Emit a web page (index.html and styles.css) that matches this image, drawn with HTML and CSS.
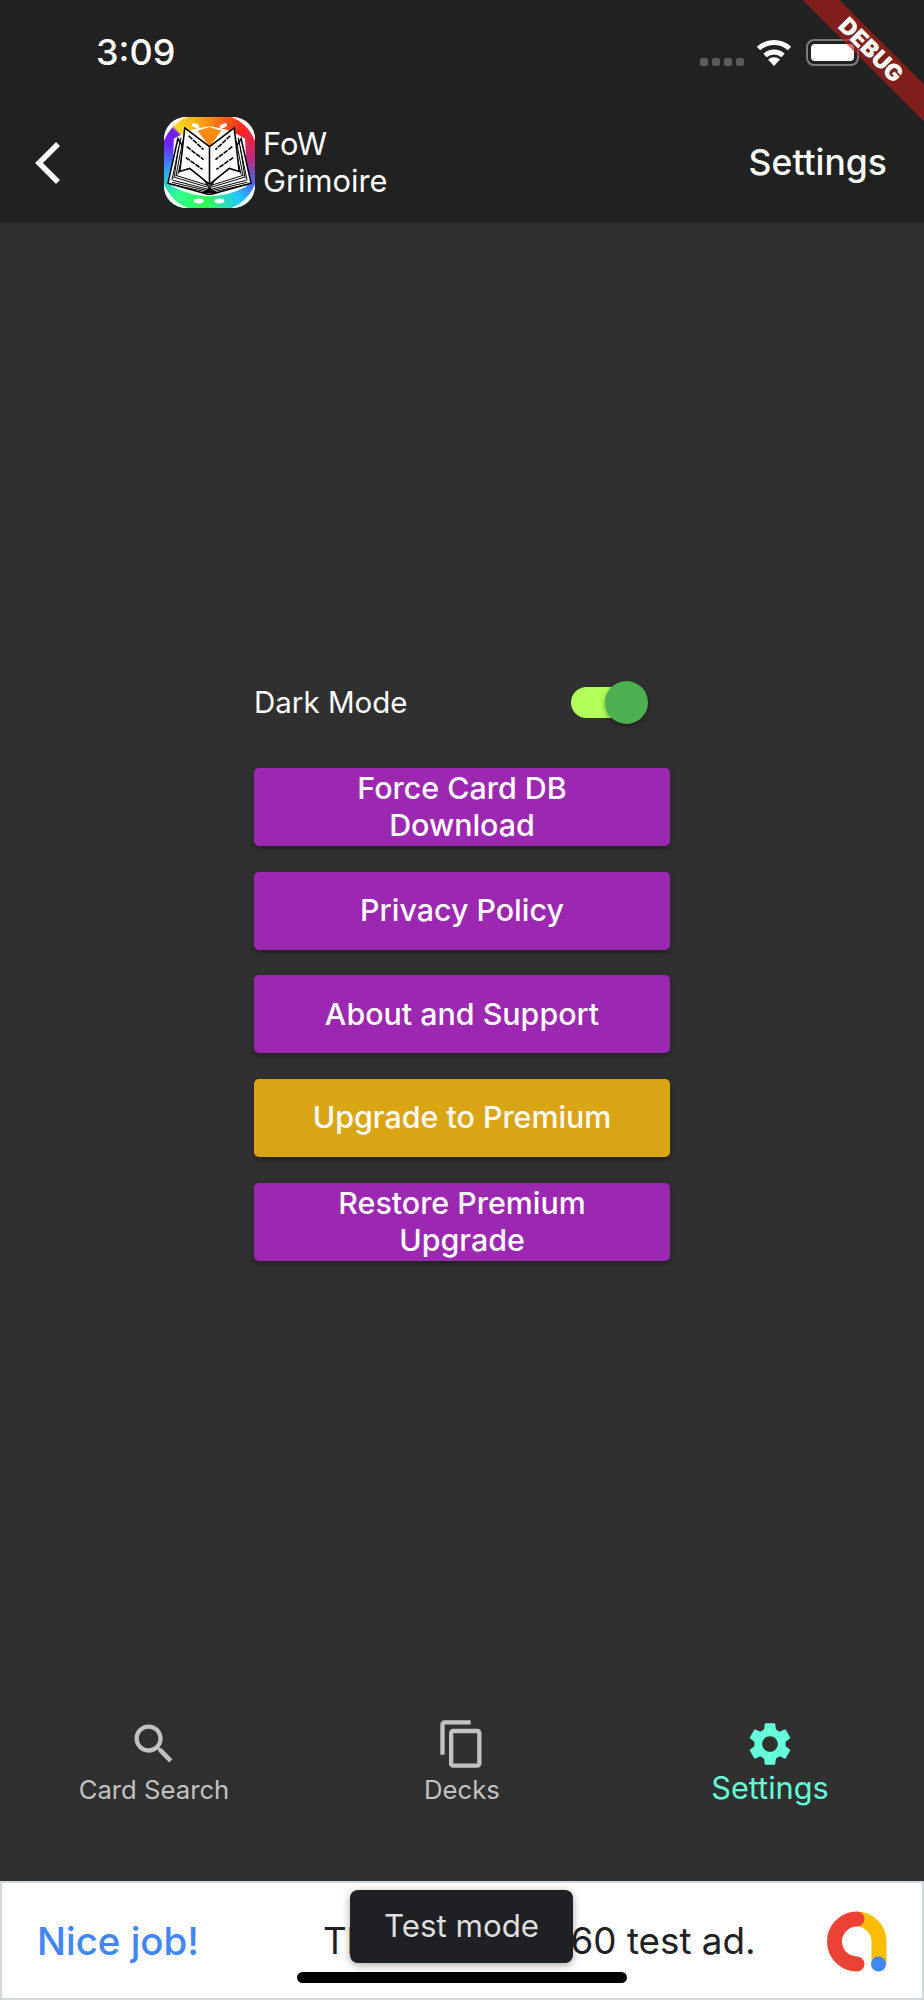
FILE: index.html
```html
<!DOCTYPE html>
<html lang="en">

<head>
    <meta charset="UTF-8">
    <meta name="viewport" content="width=device-width, initial-scale=1.0">
    <title>FoW Grimoire Settings</title>
    <link rel="stylesheet" href="styles.css">
</head>

<body>
    <div class="screen">
        <!-- App bar with status bar -->
        <header class="appbar">
            <div class="statusbar">
                <span class="clock">3:09</span>
                <div class="status-icons">
                    <div class="signal"><i></i><i></i><i></i><i></i></div>
                    <svg class="wifi" width="36" height="28" viewBox="0 0 36 28">
                        <path d="M2.5 10.5A23 23 0 0 1 33.5 10.5" fill="none" stroke="#fff" stroke-width="5" />
                        <path d="M9 17.5A13.5 13.5 0 0 1 27 17.5" fill="none" stroke="#fff" stroke-width="5" />
                        <path d="M18 28L12 21.5A9 9 0 0 1 24 21.5Z" fill="#fff" />
                    </svg>
                    <div class="battery"><div class="battery-level"></div></div>
                </div>
            </div>
            <div class="toolbar">
                <svg class="back" width="26" height="44" viewBox="0 0 26 44">
                    <path d="M23 3L4 22L23 41" fill="none" stroke="#fff" stroke-width="5.5" />
                </svg>
                <div class="logo">
                    <svg width="91" height="91" viewBox="0 0 92 92">
                        <!-- white corners and petals -->
                        <path d="M0 24V0H24Q8 6 0 24ZM68 0H92V24Q84 6 68 0ZM0 68V92H24Q8 86 0 68ZM92 68V92H68Q84 86 92 68Z" fill="#fff" />
                        <g fill="#fff">
                            <ellipse cx="46" cy="11" rx="6" ry="1.5" />
                            <ellipse cx="32" cy="9" rx="4" ry="2" transform="rotate(25 32 9)" />
                            <ellipse cx="60" cy="9" rx="4" ry="2" transform="rotate(-25 60 9)" />
                            <ellipse cx="35" cy="85" rx="5" ry="2.5" />
                            <ellipse cx="56" cy="85" rx="5" ry="2.5" />
                            <path d="M10 22Q46 -2 82 22L84 70Q46 90 8 70Z" opacity="0.95" />
                        </g>
                        <path d="M34 14L46 30L58 14L46 10Z" fill="#ff8a10" />
                        <!-- left and right page stacks -->
                        <path d="M14 22L4 67L44 78H48L88 67L78 22L46 72Z" fill="#fff" stroke="#000" stroke-width="1.5" />
                        <g stroke="#000" stroke-width="1" fill="none">
                            <path d="M17 21L8 64M15 30L10 62M19 24L12 60M21 30L14 58M75 21L84 64M77 30L82 62M73 24L80 60M71 30L78 58" />
                            <path d="M7 68L44 76M8 66L44 74.5M9 64L44 73M11 61L44 71M12 59L44 69M85 68L48 76M84 66L48 74.5M83 64L48 73M81 61L48 71M80 59L48 69" />
                        </g>
                        <path d="M21 11L46 30V68L26 52L16 55ZM71 11L46 30V68L66 52L76 55Z" fill="#fff" stroke="#000" stroke-width="1.6" />
                        <path d="M25 19L40 33M23 30L40 43M22 41L39 53M67 19L52 33M69 30L52 43M70 41L53 53" fill="none" stroke="#000" stroke-width="1.6" stroke-dasharray="5 1" />
                        <path d="M38 77H54L46 71Z" fill="#000" />
                    </svg>
                </div>
                <div class="app-name">FoW<br>Grimoire</div>
                <div class="page-title">Settings</div>
            </div>
        </header>

        <!-- Settings list -->
        <main class="content">
            <div class="settings">
                <div class="toggle-row">
                    <span class="toggle-label">Dark Mode</span>
                    <div class="switch"><div class="switch-thumb"></div></div>
                </div>
                <button class="btn">Force Card DB<br>Download</button>
                <button class="btn">Privacy Policy</button>
                <button class="btn">About and Support</button>
                <button class="btn btn-gold">Upgrade to Premium</button>
                <button class="btn">Restore Premium<br>Upgrade</button>
            </div>
        </main>

        <!-- Bottom navigation -->
        <nav class="bottom-nav">
            <div class="nav-item">
                <svg width="52" height="52" viewBox="0 0 24 24" fill="#c2c2c2">
                    <path d="M15.5 14h-.79l-.28-.27C15.41 12.59 16 11.11 16 9.5 16 5.91 13.09 3 9.5 3S3 5.91 3 9.5 5.91 16 9.5 16c1.61 0 3.09-.59 4.23-1.57l.27.28v.79l5 4.99L20.49 19l-4.99-5zm-6 0C7.01 14 5 11.99 5 9.5S7.01 5 9.5 5 14 7.01 14 9.5 11.99 14 9.5 14z" />
                </svg>
                <span>Card Search</span>
            </div>
            <div class="nav-item">
                <svg width="52" height="52" viewBox="0 0 24 24" fill="#c2c2c2">
                    <path d="M16 1H4c-1.1 0-2 .9-2 2v14h2V3h12V1zm3 4H8c-1.1 0-2 .9-2 2v14c0 1.1.9 2 2 2h11c1.1 0 2-.9 2-2V7c0-1.1-.9-2-2-2zm0 16H8V7h11v14z" />
                </svg>
                <span>Decks</span>
            </div>
            <div class="nav-item active">
                <svg width="52" height="52" viewBox="0 0 24 24" fill="#64ffda">
                    <path d="M19.14 12.94c.04-.3.06-.61.06-.94 0-.32-.02-.64-.07-.94l2.03-1.58c.18-.14.23-.41.12-.61l-1.92-3.32c-.12-.22-.37-.29-.59-.22l-2.39.96c-.5-.38-1.03-.7-1.62-.94l-.36-2.54c-.04-.24-.24-.41-.48-.41h-3.84c-.24 0-.43.17-.47.41l-.36 2.54c-.59.24-1.13.57-1.62.94l-2.39-.96c-.22-.08-.47 0-.59.22L2.74 8.87c-.12.21-.08.47.12.61l2.03 1.58c-.05.3-.09.63-.09.94s.02.64.07.94l-2.03 1.58c-.18.14-.23.41-.12.61l1.92 3.32c.12.22.37.29.59.22l2.39-.96c.5.38 1.03.7 1.62.94l.36 2.54c.05.24.24.41.48.41h3.84c.24 0 .44-.17.47-.41l.36-2.54c.59-.24 1.13-.56 1.62-.94l2.39.96c.22.08.47 0 .59-.22l1.92-3.32c.12-.22.07-.47-.12-.61l-2.01-1.58zM12 15.6c-1.98 0-3.6-1.62-3.6-3.6s1.62-3.6 3.6-3.6 3.6 1.62 3.6 3.6-1.62 3.6-3.6 3.6z" />
                </svg>
                <span>Settings</span>
            </div>
        </nav>

        <!-- Test ad banner -->
        <div class="ad">
            <span class="ad-cta">Nice job!</span>
            <span class="ad-text">This is a 468x60 test ad.</span>
            <svg class="ad-logo" width="62" height="62" viewBox="0 0 62 62">
                <path d="M31 9A22.5 22.5 0 0 1 53 31V54" fill="none" stroke="#fbbc04" stroke-width="15" />
                <path d="M31 9A22.5 22.5 0 1 0 31 54" fill="none" stroke="#ea4335" stroke-width="15" stroke-linecap="round" />
                <circle cx="52.5" cy="54" r="7.5" fill="#4285f4" />
            </svg>
        </div>

        <!-- Overlays -->
        <div class="toast">Test mode</div>
        <div class="home-bar"></div>
        <div class="debug-banner">DEBUG</div>
    </div>
</body>

</html>
```

FILE: styles.css
```css
* {
    box-sizing: border-box;
}

body {
    margin: 0;
    font-family: "Inter", "Roboto", sans-serif;
    background-color: #303030;
    color: #fff;
}

.screen {
    position: relative;
    display: flex;
    flex-direction: column;
    width: 924px;
    height: 2000px;
    overflow: hidden;
}

.appbar {
    height: 222px;
    flex-shrink: 0;
    background-color: #212121;
    box-shadow: 0 2px 5px rgba(0, 0, 0, 0.15);
}

.statusbar {
    display: flex;
    align-items: center;
    justify-content: space-between;
    height: 104px;
    padding: 0 65px 0 96px;
}

.clock {
    font-size: 36px;
    font-weight: 500;
}

.status-icons {
    display: flex;
    align-items: center;
    gap: 14px;
}

.signal {
    display: flex;
    gap: 4px;
    margin: 20px -2px 0 0;
}

.signal i {
    width: 8px;
    height: 8px;
    border-radius: 2px;
    background-color: #5a5a5a;
}

.battery {
    width: 53px;
    height: 27px;
    padding: 3px;
    border: 2px solid #7c7c7c;
    border-radius: 8px;
}

.battery-level {
    height: 100%;
    border-radius: 4px;
    background-color: #fff;
}

.toolbar {
    display: flex;
    align-items: center;
    height: 118px;
    padding: 0 37px 0 35px;
}

.back {
    margin-right: 103px;
}

.logo {
    width: 91px;
    height: 91px;
    margin: -2px 8px 0 0;
    border-radius: 22px;
    overflow: hidden;
    background: conic-gradient(#ff8c10 0deg, #ff2424 45deg, #c02a80 85deg, #5060e8 115deg, #22c8ff 140deg, #30ff50 185deg, #30ff90 225deg, #30a0ff 260deg, #7020f0 295deg, #7020f0 312deg, #ffe020 316deg, #ff8c10 360deg);
}

.logo svg {
    display: block;
}

.app-name {
    margin-top: -3px;
    font-size: 30.8px;
    line-height: 37px;
}

.page-title {
    margin: -2px 0 0 auto;
    font-size: 35.5px;
    font-weight: 500;
}

.content {
    flex: 1;
    display: flex;
    align-items: center;
    justify-content: center;
}

.settings {
    display: flex;
    flex-direction: column;
    width: 416px;
}

.toggle-row {
    display: flex;
    align-items: center;
    justify-content: space-between;
    height: 48px;
    margin-bottom: 41px;
    padding-right: 41px;
    font-size: 29.5px;
}

.toggle-label {
    margin-top: -2px;
}

.switch {
    position: relative;
    width: 58px;
    height: 31px;
    border-radius: 16px;
    background-color: #b2ff59;
}

.switch-thumb {
    position: absolute;
    top: -6px;
    right: -19px;
    width: 43px;
    height: 43px;
    border-radius: 50%;
    background-color: #4caf50;
    box-shadow: 0 2px 5px rgba(0, 0, 0, 0.4);
}

.btn {
    height: 78px;
    margin-bottom: 25.7px;
    padding: 0;
    border: none;
    border-radius: 5px;
    background-color: #9c27b0;
    color: #fff;
    font-family: inherit;
    font-size: 30.4px;
    font-weight: 500;
    line-height: 37px;
    text-align: center;
    box-shadow: 0 3px 5px rgba(0, 0, 0, 0.3);
}

.btn:last-child {
    margin-bottom: 0;
}

.btn-gold {
    background-color: #daa515;
}

.bottom-nav {
    display: grid;
    grid-template-columns: repeat(3, 1fr);
    height: 163.5px;
    padding-top: 0.5px;
    flex-shrink: 0;
}

.nav-item {
    display: flex;
    flex-direction: column;
    align-items: center;
    color: #c2c2c2;
    font-size: 25.7px;
    line-height: 30px;
}

.nav-item span {
    margin-top: 5px;
}

.nav-item.active {
    color: #64ffda;
    font-size: 30.7px;
}

.nav-item.active span {
    margin-top: 3px;
}

.ad {
    display: flex;
    align-items: center;
    height: 119px;
    flex-shrink: 0;
    padding: 0 34px 0 35px;
    border: 2px solid #cfd8dc;
    background-color: #fff;
    color: #202124;
}

.ad-cta {
    color: #4285f4;
    font-size: 38.4px;
    font-weight: 500;
}

.ad-text {
    margin-left: 124px;
    font-size: 36.8px;
}

.ad-logo {
    display: block;
    margin-left: auto;
}

.toast {
    position: absolute;
    left: 350px;
    top: 1890px;
    width: 223px;
    height: 73px;
    border-radius: 8px;
    background-color: #1f2024;
    color: #dedede;
    font-size: 31.3px;
    line-height: 73px;
    text-align: center;
    box-shadow: 0 2px 8px rgba(0, 0, 0, 0.35);
}

.home-bar {
    position: absolute;
    left: 297px;
    top: 1972px;
    width: 330px;
    height: 11px;
    border-radius: 6px;
    background-color: #000;
}

.debug-banner {
    position: absolute;
    left: 751px;
    top: 37px;
    width: 240px;
    height: 26px;
    background-color: rgba(183, 28, 28, 0.63);
    color: #fff;
    font-size: 23px;
    font-weight: 900;
    line-height: 26px;
    text-align: center;
    transform: rotate(45deg);
}
```
